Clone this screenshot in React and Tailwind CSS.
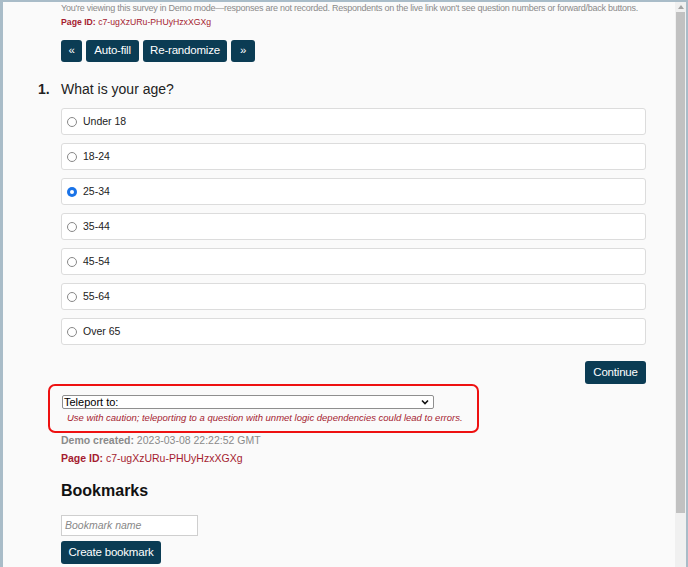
import React from 'react';

const OPTIONS = ['Under 18', '18-24', '25-34', '35-44', '45-54', '55-64', 'Over 65'];
const SELECTED = '25-34';

const Btn = ({ children, className = '' }) => (
  <button className={`h-[22px] rounded-[3px] bg-[#0b3c54] text-white text-[11.5px] leading-none whitespace-nowrap tracking-[-0.2px] ${className}`}>
    {children}
  </button>
);

const Radio = ({ checked }) =>
  checked ? (
    <span className="w-[10px] h-[10px] rounded-full bg-[#1a73e8] flex items-center justify-center shrink-0">
      <span className="w-[4px] h-[4px] rounded-full bg-white" />
    </span>
  ) : (
    <span className="w-[10px] h-[10px] rounded-full border border-[#888] bg-white shrink-0" />
  );

export default function App() {
  return (
    <div
      className="w-[688px] h-[567px] overflow-hidden flex bg-[#a9bcc8] pl-[3px] pt-[2px] pr-[2px] text-[#333]"
      style={{ fontFamily: '"Liberation Sans", Arial, sans-serif' }}
    >
      {/* page */}
      <div className="flex-1 min-w-0 bg-[#fafafa] overflow-hidden">
        <div className="pl-[58px] pr-[20px]">
          <p className="text-[9px] leading-[12px] text-[#8a8a8a] tracking-[-0.25px] whitespace-nowrap">
            You're viewing this survey in Demo mode—responses are not recorded. Respondents on the live link won't see question numbers or forward/back buttons.
          </p>
          <p className="mt-[2px] text-[8.7px] leading-[12px] text-[#a51c30]">
            <span className="font-bold">Page ID:</span> c7-ugXzURu-PHUyHzxXGXg
          </p>

          <div className="mt-[12px] flex gap-[4px]">
            <Btn className="w-[21px]">«</Btn>
            <Btn className="w-[53px]">Auto-fill</Btn>
            <Btn className="w-[84px]">Re-randomize</Btn>
            <Btn className="w-[24px]">»</Btn>
          </div>
        </div>

        <div className="pl-[35px] pr-[29px]">
          <div className="mt-[18px] flex items-baseline text-[14px] leading-[18px] text-[#222]">
            <span className="w-[23px] font-bold">1.</span>
            <span>What is your age?</span>
          </div>

          <div className="ml-[23px] mt-[10px] flex flex-col gap-[8px]">
            {OPTIONS.map((o) => (
              <div
                key={o}
                className="h-[27px] rounded-[3px] border border-[#dcdcdc] bg-white flex items-center gap-[6px] pl-[5px] text-[10.5px] text-[#222]"
              >
                <Radio checked={o === SELECTED} />
                <span>{o}</span>
              </div>
            ))}
          </div>

          <div className="mt-[16px] flex justify-end">
            <Btn className="h-[23px] w-[61px]">Continue</Btn>
          </div>
        </div>

        <div className="pl-[45px]">
          <div className="w-[431px] h-[49px] border-[2.5px] border-[#ee1111] rounded-[7px] pt-[9px] pl-[12px]">
            <div className="w-[372px] h-[14px] border border-[#8f8f8f] rounded-[2px] bg-white flex items-center justify-between pl-[1px] pr-[4px] text-[11px] leading-none text-black">
              <span>Teleport to:</span>
              <svg width="8" height="6" viewBox="0 0 8 6">
                <path d="M1 1.5 L4 4.5 L7 1.5" stroke="#111" strokeWidth="1.6" fill="none" />
              </svg>
            </div>
            <p className="mt-[3px] pl-[5px] text-[9.5px] leading-[12px] italic text-[#a51c30]">
              Use with caution; teleporting to a question with unmet logic dependencies could lead to errors.
            </p>
          </div>
        </div>

        <div className="pl-[58px]">
          <p className="text-[10.5px] leading-[14px] text-[#8a8a8a]">
            <span className="font-bold">Demo created:</span> 2023-03-08 22:22:52 GMT
          </p>
          <p className="mt-[4px] text-[10.5px] leading-[14px] text-[#a51c30]">
            <span className="font-bold">Page ID:</span> c7-ugXzURu-PHUyHzxXGXg
          </p>

          <h2 className="mt-[16px] text-[16px] leading-[20px] font-bold text-[#111]">Bookmarks</h2>

          <div className="mt-[14px] w-[137px] h-[21px] border border-[#cfcfcf] bg-white flex items-center pl-[3px] text-[10.5px] italic text-[#888]">
            Bookmark name
          </div>
          <Btn className="mt-[5px] h-[23px] w-[100px]">Create bookmark</Btn>
        </div>
      </div>

      {/* scrollbar */}
      <div className="w-[11px] bg-[#f0f0f0] flex flex-col shrink-0">
        <div className="h-[10px] flex items-center justify-center">
          <svg width="6" height="4" viewBox="0 0 6 4">
            <path d="M0 4 L3 0 L6 4 Z" fill="#a3a3a3" />
          </svg>
        </div>
        <div className="mx-[1px] h-[501px] bg-[#c1c1c1]" />
      </div>
    </div>
  );
}
